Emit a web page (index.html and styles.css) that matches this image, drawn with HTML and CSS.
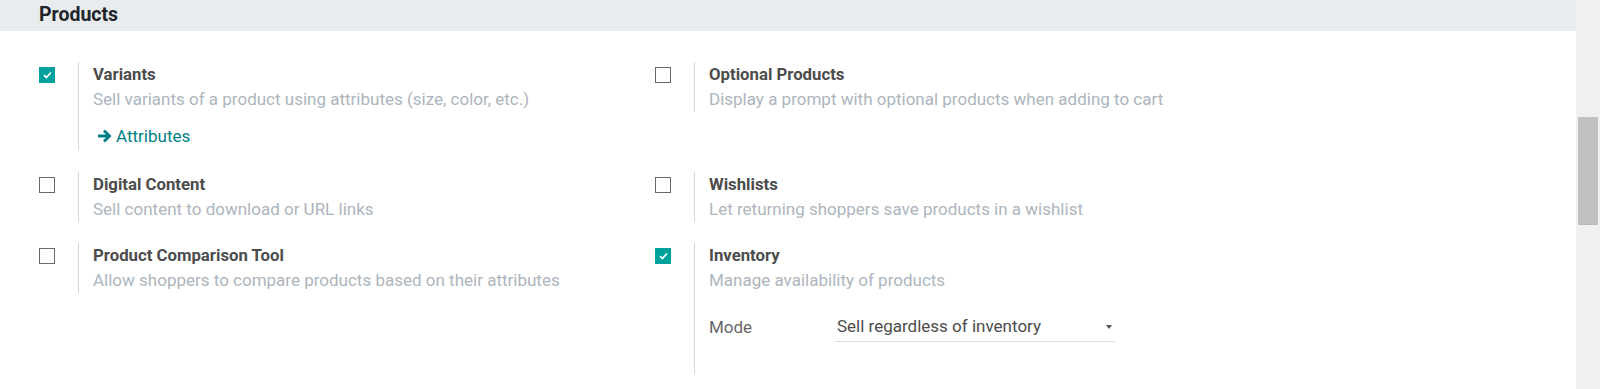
FILE: index.html
```html
<!DOCTYPE html>
<html lang="en">
<head>
  <meta charset="UTF-8">
  <title>Settings - Products</title>
  <link rel="stylesheet" href="styles.css">
</head>
<body>
  <div class="page">
    <div class="main">
      <h2 class="section-title">Products</h2>

      <div class="settings">
        <!-- Variants -->
        <div class="setting">
          <div class="left-pane">
            <span class="check checked">
              <svg width="9" height="8" viewBox="0 0 9 8"><path d="M1 4.2 3.4 6.5 8 1.5" fill="none" stroke="#fff" stroke-width="1.8"/></svg>
            </span>
          </div>
          <div class="right-pane">
            <div class="title">Variants</div>
            <div class="desc">Sell variants of a product using attributes (size, color, etc.)</div>
            <div class="link-row">
              <a class="link" href="#">
                <svg class="arrow" width="15" height="14" viewBox="0 0 15 14"><path d="M1 5.5h8L6 2.5 8 0.5 14.5 7 8 13.5 6 11.5 9 8.5H1z" fill="currentColor"/></svg>
                Attributes
              </a>
            </div>
          </div>
        </div>

        <!-- Optional Products -->
        <div class="setting">
          <div class="left-pane"><span class="check"></span></div>
          <div class="right-pane">
            <div class="title">Optional Products</div>
            <div class="desc">Display a prompt with optional products when adding to cart</div>
          </div>
        </div>

        <!-- Digital Content -->
        <div class="setting">
          <div class="left-pane"><span class="check"></span></div>
          <div class="right-pane">
            <div class="title">Digital Content</div>
            <div class="desc">Sell content to download or URL links</div>
          </div>
        </div>

        <!-- Wishlists -->
        <div class="setting">
          <div class="left-pane"><span class="check"></span></div>
          <div class="right-pane">
            <div class="title">Wishlists</div>
            <div class="desc">Let returning shoppers save products in a wishlist</div>
          </div>
        </div>

        <!-- Product Comparison Tool -->
        <div class="setting">
          <div class="left-pane"><span class="check"></span></div>
          <div class="right-pane">
            <div class="title">Product Comparison Tool</div>
            <div class="desc">Allow shoppers to compare products based on their attributes</div>
          </div>
        </div>

        <!-- Inventory -->
        <div class="setting">
          <div class="left-pane">
            <span class="check checked">
              <svg width="9" height="8" viewBox="0 0 9 8"><path d="M1 4.2 3.4 6.5 8 1.5" fill="none" stroke="#fff" stroke-width="1.8"/></svg>
            </span>
          </div>
          <div class="right-pane tall">
            <div class="title">Inventory</div>
            <div class="desc">Manage availability of products</div>
            <div class="field-row">
              <span class="field-label">Mode</span>
              <div class="select">
                <span>Sell regardless of inventory</span>
                <span class="caret"></span>
              </div>
            </div>
          </div>
        </div>
      </div>
    </div>

    <div class="scrollbar">
      <div class="thumb"></div>
    </div>
  </div>
</body>
</html>
```

FILE: styles.css
```css
/* base */
html, body {
  margin: 0;
  padding: 0;
  height: 100%;
}
body {
  font-family: Roboto, "Liberation Sans", sans-serif;
  font-size: 17px;
  line-height: 25px;
  color: #4c4c4c;
  background: #fff;
}
.page {
  display: flex;
  height: 100%;
}
.main {
  flex: 1;
  overflow: hidden;
}

/* section header */
.section-title {
  margin: 0;
  height: 31px;
  padding-left: 39px;
  background-color: #e9ecef;
  font-size: 19.5px;
  font-weight: bold;
  line-height: 29px;
  color: #212529;
}

/* two-column settings grid */
.settings {
  display: grid;
  grid-template-columns: 616px 616px;
  align-items: start;
  row-gap: 21.5px;
  padding: 31px 0 0 39px;
}
.setting {
  display: flex;
  align-items: flex-start;
}
.left-pane {
  width: 39px;
  flex: none;
  padding-top: 5px;
}
.check {
  display: flex;
  align-items: center;
  justify-content: center;
  box-sizing: border-box;
  width: 16px;
  height: 16px;
  border: 1px solid #6a6a6a;
  background: #fff;
}
.check.checked {
  border-color: #00a09d;
  background: #00a09d;
}
.right-pane {
  border-left: 1px solid #d6d6d6;
  padding-left: 14px;
}
.right-pane.tall {
  padding-bottom: 32px;
}
.title {
  font-size: 16.75px;
  font-weight: bold;
  color: #4c4c4c;
}
.desc {
  color: #adb5bd;
}

/* link under Variants */
.link-row {
  padding: 10px 0 0 4px;
  height: 28px;
}
.link {
  display: inline-flex;
  align-items: center;
  gap: 4px;
  color: #017e84;
  text-decoration: none;
  line-height: 28px;
}

/* inventory mode field */
.field-row {
  display: flex;
  align-items: flex-end;
  margin-top: 19px;
  height: 30px;
}
.field-label {
  width: 126px;
  color: #666;
  line-height: 30px;
}
.select {
  display: flex;
  align-items: center;
  justify-content: space-between;
  box-sizing: border-box;
  width: 280px;
  height: 30px;
  padding: 0 2px;
  border-bottom: 1px solid #dedede;
  color: #4c4c4c;
}
.caret {
  width: 0;
  height: 0;
  margin-right: 1px;
  border-left: 3.5px solid transparent;
  border-right: 3.5px solid transparent;
  border-top: 4px solid #555;
}

/* fake window scrollbar */
.scrollbar {
  width: 24px;
  flex: none;
  background: #f0f0f0;
}
.thumb {
  margin: 117px 2px 0 2px;
  height: 107px;
  background: #c1c1c1;
  border-bottom: 1px solid #b8b8b8;
}
```
